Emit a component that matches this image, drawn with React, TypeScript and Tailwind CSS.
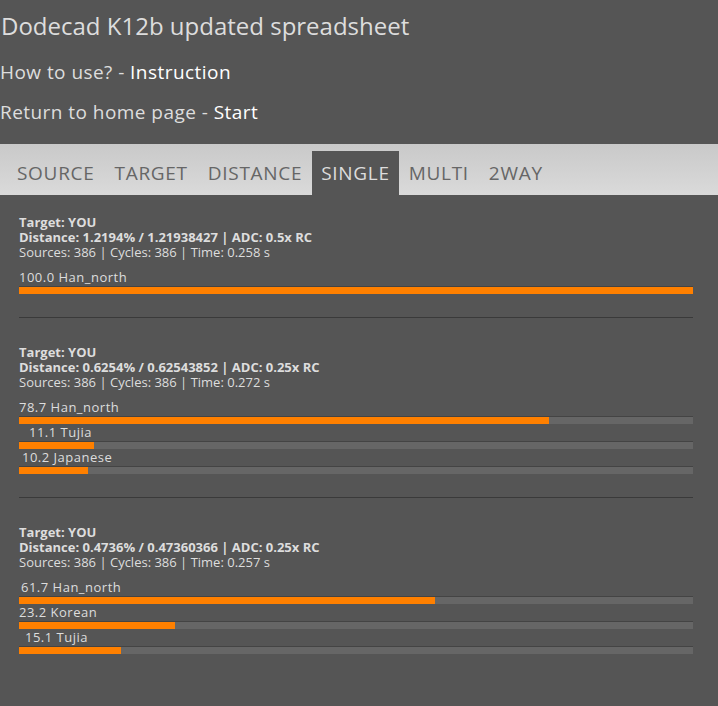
const font = { fontFamily: "'Open Sans', 'Liberation Sans', sans-serif" };

type Row = { pct: number; label: string; pad: string };

const runs: { distance: string; adc: string; time: string; rows: Row[] }[] = [
  {
    distance: "1.2194% / 1.21938427",
    adc: "0.5x RC",
    time: "0.258",
    rows: [{ pct: 100.0, label: "100.0 Han_north", pad: "pl-0" }],
  },
  {
    distance: "0.6254% / 0.62543852",
    adc: "0.25x RC",
    time: "0.272",
    rows: [
      { pct: 78.7, label: "78.7 Han_north", pad: "pl-0" },
      { pct: 11.1, label: "11.1 Tujia", pad: "pl-[10px]" },
      { pct: 10.2, label: "10.2 Japanese", pad: "pl-[3px]" },
    ],
  },
  {
    distance: "0.4736% / 0.47360366",
    adc: "0.25x RC",
    time: "0.257",
    rows: [
      { pct: 61.7, label: "61.7 Han_north", pad: "pl-[2px]" },
      { pct: 23.2, label: "23.2 Korean", pad: "pl-0" },
      { pct: 15.1, label: "15.1 Tujia", pad: "pl-[6px]" },
    ],
  },
];

const tabs = ["SOURCE", "TARGET", "DISTANCE", "SINGLE", "MULTI", "2WAY"];

export default function App() {
  return (
    <div className="min-h-[706px] w-[718px] bg-[#555555] text-[#dddddd]" style={font}>
      <h1 className="pl-px pt-[11px] text-[24px] leading-[30px] font-normal">Dodecad K12b updated spreadsheet</h1>
      <p className="mt-[19px] text-[19px] leading-[24px] tracking-[0.45px]">
        How to use? - <span className="text-white">Instruction</span>
      </p>
      <p className="mt-[16px] text-[19px] leading-[24px] tracking-[0.45px]">
        Return to home page - <span className="text-white">Start</span>
      </p>

      <div className="mt-[20px] flex h-[51px] items-end bg-gradient-to-b from-[#c9c9c9] to-[#dadada] pl-[7px]">
        {tabs.map((t) => (
          <div
            key={t}
            className={
              t === "SINGLE"
                ? "flex h-[44px] items-center bg-[#555555] px-[9px] text-[19px] tracking-[0.7px] text-[#dddddd]"
                : "flex h-[44px] items-center px-[10px] text-[19px] tracking-[0.7px] text-[#666666]"
            }
          >
            {t}
          </div>
        ))}
      </div>

      <div className="pl-[19px] pr-[25px]">
        {runs.map((r, i) => (
          <div
            key={i}
            className={
              i === 0
                ? "border-b border-[#3a3a3a] pt-[20px] pb-[23px]"
                : i === runs.length - 1
                ? "pt-[27px] pb-[23px]"
                : "border-b border-[#3a3a3a] pt-[27px] pb-[23px]"
            }
          >
            <div className="text-[13px] leading-[15px] font-bold">Target: YOU</div>
            <div className="text-[13px] leading-[15px] font-bold">
              Distance: {r.distance} | ADC: {r.adc}
            </div>
            <div className="text-[13px] leading-[15px]">
              Sources: 386 | Cycles: 386 | Time: {r.time} s
            </div>
            <div className="mt-[9px]">
              {r.rows.map((row) => (
                <div key={row.label}>
                  <div className={`text-[13px] leading-[17px] tracking-[0.5px] ${row.pad}`}>{row.label}</div>
                  <div className="h-[8px] border-t border-[#444444] bg-[#666666]">
                    <div className="h-full bg-[#ff8000]" style={{ width: `${row.pct}%` }} />
                  </div>
                </div>
              ))}
            </div>
          </div>
        ))}
      </div>
    </div>
  );
}
